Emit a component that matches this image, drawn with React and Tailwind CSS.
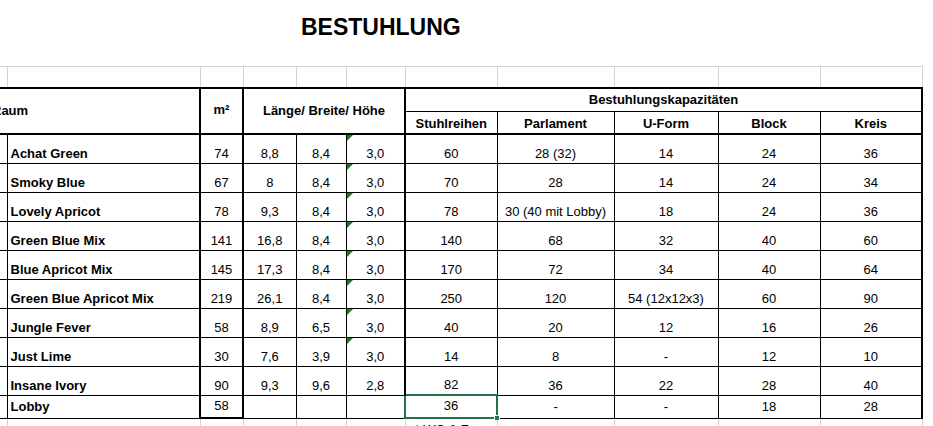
const rows = [
  ['Achat Green', '74', '8,8', '8,4', '3,0', '60', '28 (32)', '14', '24', '36', true],
  ['Smoky Blue', '67', '8', '8,4', '3,0', '70', '28', '14', '24', '34', true],
  ['Lovely Apricot', '78', '9,3', '8,4', '3,0', '78', '30 (40 mit Lobby)', '18', '24', '36', true],
  ['Green Blue Mix', '141', '16,8', '8,4', '3,0', '140', '68', '32', '40', '60', true],
  ['Blue Apricot Mix', '145', '17,3', '8,4', '3,0', '170', '72', '34', '40', '64', true],
  ['Green Blue Apricot Mix', '219', '26,1', '8,4', '3,0', '250', '120', '54 (12x12x3)', '60', '90', true],
  ['Jungle Fever', '58', '8,9', '6,5', '3,0', '40', '20', '12', '16', '26', true],
  ['Just Lime', '30', '7,6', '3,9', '3,0', '14', '8', '-', '12', '10', true],
  ['Insane Ivory', '90', '9,3', '9,6', '2,8', '82', '36', '22', '28', '40', false],
]

const widths = ['w-[20px]', 'w-[193px]', 'w-[43px]', 'w-[53px]', 'w-[50px]', 'w-[59px]', 'w-[92px]', 'w-[117px]', 'w-[104px]', 'w-[102px]', 'w-[102px]']

const cell = 'border border-black h-[29px] align-bottom pb-[1px] text-center'
const gray = 'border border-[#d4d4d4]'

function Flag() {
  return (
    <span className="absolute left-0 top-0 w-0 h-0 border-t-[6px] border-r-[6px] border-t-[#1e7a1e] border-r-transparent" />
  )
}

export default function App() {
  return (
    <div className="w-[933px] h-[426px] overflow-hidden bg-white text-black text-[13px] leading-[16px]" style={{ fontFamily: '"Liberation Sans", Arial, sans-serif' }}>
      <table className="table-fixed border-collapse ml-[-13px] w-[935px]">
        <colgroup>
          {widths.map((w, i) => <col key={i} className={w} />)}
        </colgroup>
        <tbody>
          {/* title */}
          <tr>
            <td colSpan={11} className="h-[66px] align-top pt-[16px] pl-[314px] text-left">
              <span className="text-[23px] leading-[23px] font-bold">BESTUHLUNG</span>
            </td>
          </tr>
          {/* empty gray row */}
          <tr>
            {widths.map((w, i) => <td key={i} className={`${gray} h-[22px] ${i === 0 ? 'border-l-0' : ''}`} />)}
          </tr>
          {/* header */}
          <tr>
            <td colSpan={2} rowSpan={2} className="border-t-2 border-b-2 border-r-2 border-black font-bold text-left pl-[5px] align-middle">Raum</td>
            <td rowSpan={2} className="border-2 border-black font-bold text-center align-middle pb-[2px]">m²</td>
            <td colSpan={3} rowSpan={2} className="border-2 border-black font-bold text-center align-middle">Länge/ Breite/ Höhe</td>
            <td colSpan={5} className="border-2 border-b border-black font-bold text-center h-[23px] align-middle">Bestuhlungskapazitäten</td>
          </tr>
          <tr>
            {['Stuhlreihen', 'Parlament', 'U-Form', 'Block', 'Kreis'].map((h, i) => (
              <td key={h} className={`border border-b-2 border-black font-bold text-center h-[23px] align-middle pt-[3px] ${i === 0 ? 'border-l-2' : ''} ${i === 4 ? 'border-r-2' : ''}`}>{h}</td>
            ))}
          </tr>
          {rows.map(r => (
            <tr key={r[0]}>
              <td className="border border-black border-l-0" />
              <td className={`${cell} text-left pl-[3px] font-bold`}>{r[0]}</td>
              <td className={`${cell} border-x-2`}>{r[1]}</td>
              <td className={cell}>{r[2]}</td>
              <td className={cell}>{r[3]}</td>
              <td className={`${cell} relative`}>
                {r[10] && <Flag />}
                {r[4]}
              </td>
              <td className={`${cell} border-l-2`}>{r[5]}</td>
              <td className={cell}>{r[6]}</td>
              <td className={cell}>{r[7]}</td>
              <td className={cell}>{r[8]}</td>
              <td className={`${cell} border-r-2`}>{r[9]}</td>
            </tr>
          ))}
          {/* lobby */}
          <tr>
            <td className="border border-black border-l-0 h-[23px]" />
            <td className="border border-black h-[23px] align-bottom pb-[3px] text-left pl-[3px] font-bold">Lobby</td>
            <td className="border-2 border-t border-black align-bottom pb-[3px] text-center">58</td>
            <td className="border border-black" />
            <td className="border border-black" />
            <td className="border border-black" />
            <td className="border-2 border-[#217346] align-bottom pb-[3px] text-center relative">
              36
              <span className="absolute right-[-4px] bottom-[-4px] w-[6px] h-[6px] bg-[#217346] border border-white" />
            </td>
            <td className="border border-black align-bottom pb-[3px] text-center">-</td>
            <td className="border border-black align-bottom pb-[3px] text-center">-</td>
            <td className="border border-black align-bottom pb-[3px] text-center">18</td>
            <td className="border border-black border-r-2 align-bottom pb-[3px] text-center">28</td>
          </tr>
          {/* trailing gray row */}
          <tr>
            {widths.map((w, i) => (
              <td key={i} className={`${gray} h-[20px] align-top ${i === 0 ? 'border-l-0' : ''}`}>
                {i === 6 && <span className="block whitespace-nowrap pl-[9px] pt-[3px]">* WC &amp; Foyer</span>}
              </td>
            ))}
          </tr>
        </tbody>
      </table>
    </div>
  )
}
